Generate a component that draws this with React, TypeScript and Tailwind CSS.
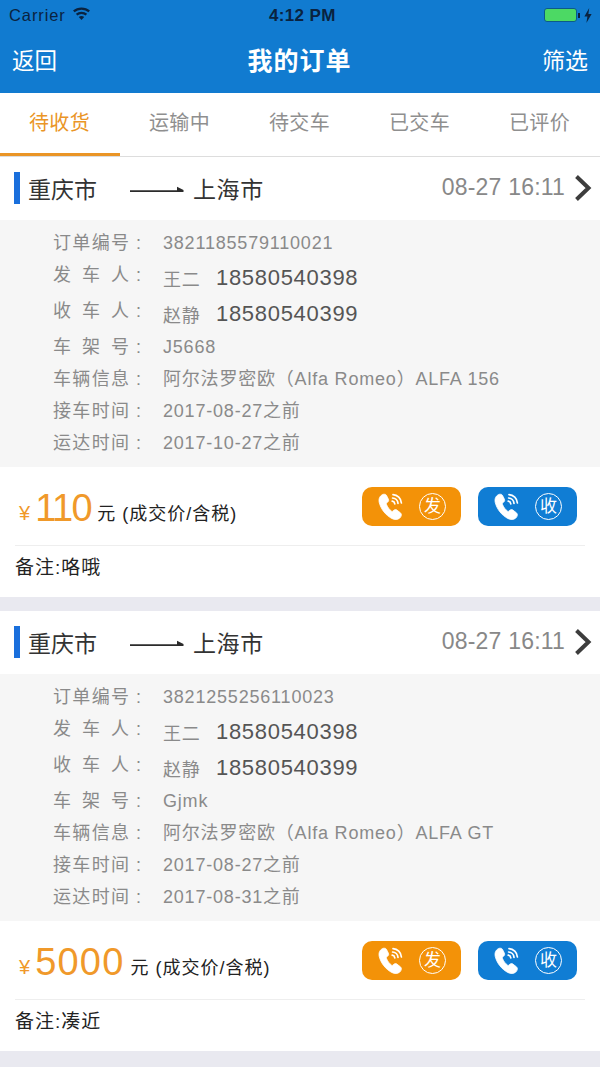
import React from "react";

const FONT = "font-['Liberation_Sans','Noto_Sans_CJK_SC',sans-serif]";

interface Order {
    no: string;
    frame: string;
    car: string;
    pickup: string;
    arrive: string;
    price: string;
    priceClass: string;
    note: string;
}

const orders: Order[] = [
    {
        no: "3821185579110021",
        frame: "J5668",
        car: "阿尔法罗密欧（Alfa Romeo）ALFA 156",
        pickup: "2017-08-27之前",
        arrive: "2017-10-27之前",
        price: "110",
        priceClass: "tracking-[-1.5px]",
        note: "咯哦",
    },
    {
        no: "3821255256110023",
        frame: "Gjmk",
        car: "阿尔法罗密欧（Alfa Romeo）ALFA GT",
        pickup: "2017-08-27之前",
        arrive: "2017-08-31之前",
        price: "5000",
        priceClass: "tracking-[1.2px]",
        note: "凑近",
    },
];

const tabs = ["待收货", "运输中", "待交车", "已交车", "已评价"];

const PhoneIcon = () => (
    <svg width="26" height="27" viewBox="0 0 26 27" fill="none">
        <path
            d="M2.6 3C4.4 0.8 7.4 0.6 8.4 2.2L10.4 6.2C11 7.4 10.5 8.4 9.6 9.2L8.6 10.1C8.3 10.4 8.3 10.8 8.4 11.2C9.4 14 11.2 16.4 13.6 18.2C14 18.5 14.4 18.5 14.7 18.2L15.9 17.2C16.8 16.5 17.9 16.4 18.9 17.1L22.4 19.8C23.9 21 23.6 23.4 21.8 25C19.8 26.8 16.6 27.1 13.6 25.4C7.6 22 3 16.4 1.2 9.4C0.6 6.8 1.2 4.6 2.6 3Z"
            fill="#fff"
            stroke="#fff"
            strokeWidth="0.8"
        />
        <path d="M14.2 8.2C15.6 8.4 16.6 9.4 16.8 10.8" stroke="#fff" strokeWidth="1.7" strokeLinecap="round" />
        <path d="M14.6 5C17.4 5.2 19.8 7.6 20 10.4" stroke="#fff" strokeWidth="1.7" strokeLinecap="round" />
        <path d="M15 1.6C19.4 1.8 23.2 5.6 23.4 10" stroke="#fff" strokeWidth="1.7" strokeLinecap="round" />
    </svg>
);

const CallButton = ({ label, color }: { label: string; color: string }) => (
    <div className={`flex h-[39px] w-[99px] items-center rounded-[10px] pl-[16px] ${color}`}>
        <PhoneIcon />
        <div className="ml-[15px] flex h-[27px] w-[27px] items-center justify-center rounded-full border border-white text-[17px] leading-none text-white">
            {label}
        </div>
    </div>
);

const Label = ({ chars }: { chars: string[] }) => (
    <div className="flex w-[110px] shrink-0 items-center">
        <div className="flex w-[76px] justify-between">
            {chars.map((c, i) => (
                <span key={i} className="tracking-normal">
                    {c}
                </span>
            ))}
        </div>
        <span className="ml-[7px]">:</span>
    </div>
);

const PersonRow = ({ label, name, phone }: { label: string[]; name: string; phone: string }) => (
    <div className="flex h-[36px] items-center pl-[53px]">
        <div className="-mt-[4px]">
            <Label chars={label} />
        </div>
        <span className="mt-[7px] w-[53px] text-[18px]">{name}</span>
        <span className="mt-[1px] text-[22px] tracking-[0.7px] text-[#555]">{phone}</span>
    </div>
);

const InfoRow = ({ label, value }: { label: string[]; value: string }) => (
    <div className="flex h-[32px] items-center pl-[53px]">
        <Label chars={label} />
        <span>{value}</span>
    </div>
);

const OrderCard = ({ order }: { order: Order }) => (
    <div>
        <div className="flex h-[63px] items-center bg-white">
            <div className="ml-[14px] mt-[-1px] h-[32px] w-[6px] bg-[#1a6fdc]" />
            <span className="ml-[8px] mt-[3px] text-[23px] text-[#333]">重庆市</span>
            <svg className="ml-[33px] mt-[2px]" width="54" height="8" viewBox="0 0 54 8">
                <path d="M0 4.2H47V0.8L53.5 4V6H0Z" fill="#2b2b2b" />
            </svg>
            <span className="ml-[9px] mt-[3px] text-[23px] tracking-[0.6px] text-[#333]">上海市</span>
            <span className="ml-auto mt-[-3px] text-[23px] tracking-[0.2px] text-[#888]">08-27 16:11</span>
            <svg className="ml-[9px] mr-[8px] mt-[-2px]" width="18" height="26" viewBox="0 0 18 26" fill="none">
                <path d="M2.5 1.5L14.5 13L2.5 24.5" stroke="#3d3d3d" strokeWidth="4" />
            </svg>
        </div>
        <div className="bg-[#f6f6f6] pb-[8px] pt-[7px] text-[18px] tracking-[0.8px] text-[#8a8a8a]">
            <InfoRow label={["订", "单", "编", "号"]} value={order.no} />
            <PersonRow label={["发", "车", "人"]} name="王二" phone="18580540398" />
            <PersonRow label={["收", "车", "人"]} name="赵静" phone="18580540399" />
            <InfoRow label={["车", "架", "号"]} value={order.frame} />
            <InfoRow label={["车", "辆", "信", "息"]} value={order.car} />
            <InfoRow label={["接", "车", "时", "间"]} value={order.pickup} />
            <InfoRow label={["运", "达", "时", "间"]} value={order.arrive} />
        </div>
        <div className="bg-white px-[15px]">
            <div className="flex h-[79px] items-center border-b border-[#eeeeee]">
                <span className="ml-[4px] mt-[14px] text-[20px] text-[#f0992a]">¥</span>
                <span className={`ml-[5px] mt-[3px] text-[38px] leading-none text-[#f0992a] ${order.priceClass}`}>{order.price}</span>
                <span className="ml-[6px] mt-[17px] text-[18px] tracking-[1px] text-[#222]">元 (成交价/含税)</span>
                <div className="ml-auto mr-[8px] flex gap-[17px]">
                    <CallButton label="发" color="bg-[#f39208]" />
                    <CallButton label="收" color="bg-[#107dd4]" />
                </div>
            </div>
            <div className="flex h-[51px] items-center pb-[7px] text-[19px] tracking-[1px] text-[#222]">备注:{order.note}</div>
        </div>
    </div>
);

const App: React.FC = () => {
    return (
        <div className={`flex h-[1067px] w-[600px] flex-col overflow-hidden bg-[#e9e9f0] ${FONT}`}>
            <div className="h-[93px] shrink-0 bg-[#117bd0]">
                <div className="relative flex h-[30px] items-center pl-[9px] pr-[8px] text-[#0a2340]">
                    <span className="mt-[1px] text-[16.5px] tracking-[0.9px]">Carrier</span>
                    <svg className="ml-[6px] mt-[-3px]" width="19" height="15" viewBox="0 0 19 15">
                        <path d="M9.5 14L6.8 11C8.3 9.6 10.7 9.6 12.2 11Z" fill="#0a2340" />
                        <path d="M4.6 8.6C7.3 6.2 11.7 6.2 14.4 8.6" stroke="#0a2340" strokeWidth="2.2" fill="none" />
                        <path d="M1.8 5.4C6 1.6 13 1.6 17.2 5.4" stroke="#0a2340" strokeWidth="2.2" fill="none" />
                    </svg>
                    <span className="absolute left-[269px] mt-[1px] text-[17px] font-bold tracking-[0.35px]">4:12 PM</span>
                    <div className="ml-auto flex items-center">
                        <div className="h-[14px] w-[33px] rounded-[3px] border border-[#0c5a8a] bg-[#4cd964]" />
                        <div className="ml-[1px] h-[5px] w-[2px] bg-[#0a2340]" />
                        <svg className="ml-[4px]" width="8" height="15" viewBox="0 0 8 15">
                            <path d="M5.2 0L0.4 8.6H3.4L2.4 15L7.6 6H4.4Z" fill="#0a2340" />
                        </svg>
                    </div>
                </div>
                <div className="flex h-[63px] items-center justify-between pl-[12px] pr-[12px] text-[22.5px] text-white">
                    <span>返回</span>
                    <span className="text-[25px] font-bold tracking-[1px]">我的订单</span>
                    <span className="text-[23px]">筛选</span>
                </div>
            </div>
            <div className="flex h-[64px] shrink-0 border-b border-[#dddddd] bg-white">
                {tabs.map((t, i) => (
                    <div
                        key={t}
                        className={
                            i === 0
                                ? "flex w-[120px] items-center justify-center border-b-[3px] border-[#ea9526] pr-[1px] text-[20px] tracking-[0.3px] text-[#ea9526]"
                                : "flex w-[120px] items-center justify-center pb-[3px] pr-[1px] text-[20px] tracking-[0.3px] text-[#8f8f8f]"
                        }
                    >
                        {t}
                    </div>
                ))}
            </div>
            <div className="flex flex-col gap-[14px]">
                {orders.map((o) => (
                    <OrderCard key={o.no} order={o} />
                ))}
            </div>
        </div>
    );
};

export default App;
